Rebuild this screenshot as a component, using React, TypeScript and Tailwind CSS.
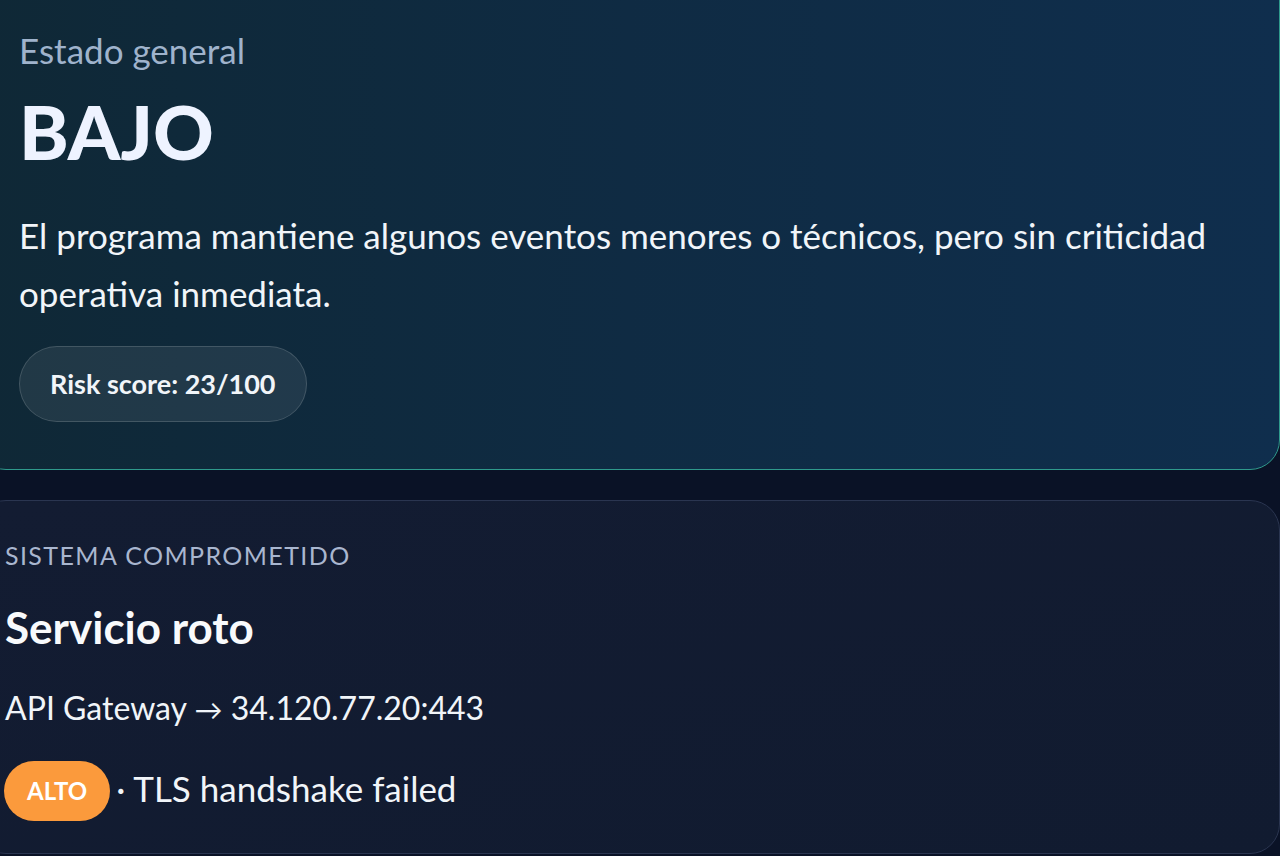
export default function App() {
  return (
    <div
      className="h-[856px] w-[1280px] overflow-hidden bg-[#0a1226] text-white"
      style={{ fontFamily: "Lato, 'Noto Sans', sans-serif" }}
    >
      <div className="-ml-[24px] -mt-[40px] flex w-[1304px] flex-col gap-[30px]">
        {/* estado general */}
        <section className="rounded-[30px] border border-[#2f9a8c] bg-gradient-to-r from-[#0f2836] via-[#0f2b43] to-[#0f2e4d] pb-[47px] pl-[42px] pr-[40px] pt-[69px]">
          <p className="text-[35px] leading-[40px] text-[#9fb3cc]">Estado general</p>
          <h1 className="mt-[21px] text-[75px] font-black leading-[80px] text-[#eef3ff]">BAJO</h1>
          <p className="mt-[35px] text-[35px] leading-[58px] text-[#f1f5f9]">
            El programa mantiene algunos eventos menores o técnicos, pero sin criticidad operativa
            inmediata.
          </p>
          <div className="mt-[24px] inline-flex h-[76px] items-center rounded-full border border-white/15 bg-white/[0.08] px-[30px] text-[27px] font-bold text-[#f1f5f9]">
            Risk score: 23/100
          </div>
        </section>

        {/* sistema comprometido */}
        <section className="h-[354px] rounded-[30px] border border-[#2a3550] bg-gradient-to-br from-[#131c32] to-[#111b30] pl-[28px] pt-[39px]">
          <p className="text-[25px] leading-[30px] tracking-[1.4px] text-[#a9b6cf]">
            SISTEMA COMPROMETIDO
          </p>
          <h2 className="mt-[33px] text-[44px] font-bold leading-[48px] text-[#f8fafc]">
            Servicio roto
          </h2>
          <p className="mt-[37px] text-[32px] leading-[40px] text-[#f1f5f9]">
            API Gateway <span className="text-[28px]">→</span> 34.120.77.20:443
          </p>
          <div className="mt-[32px] flex items-center gap-[6px] text-[35px] leading-[40px] text-[#f1f5f9]">
            <span className="-ml-[1px] inline-flex h-[60px] items-center rounded-full bg-[#fb9a3c] px-[23px] text-[24px] font-bold text-white">
              ALTO
            </span>
            <span className="-mt-[6px]">· TLS handshake failed</span>
          </div>
        </section>
      </div>
    </div>
  );
}
